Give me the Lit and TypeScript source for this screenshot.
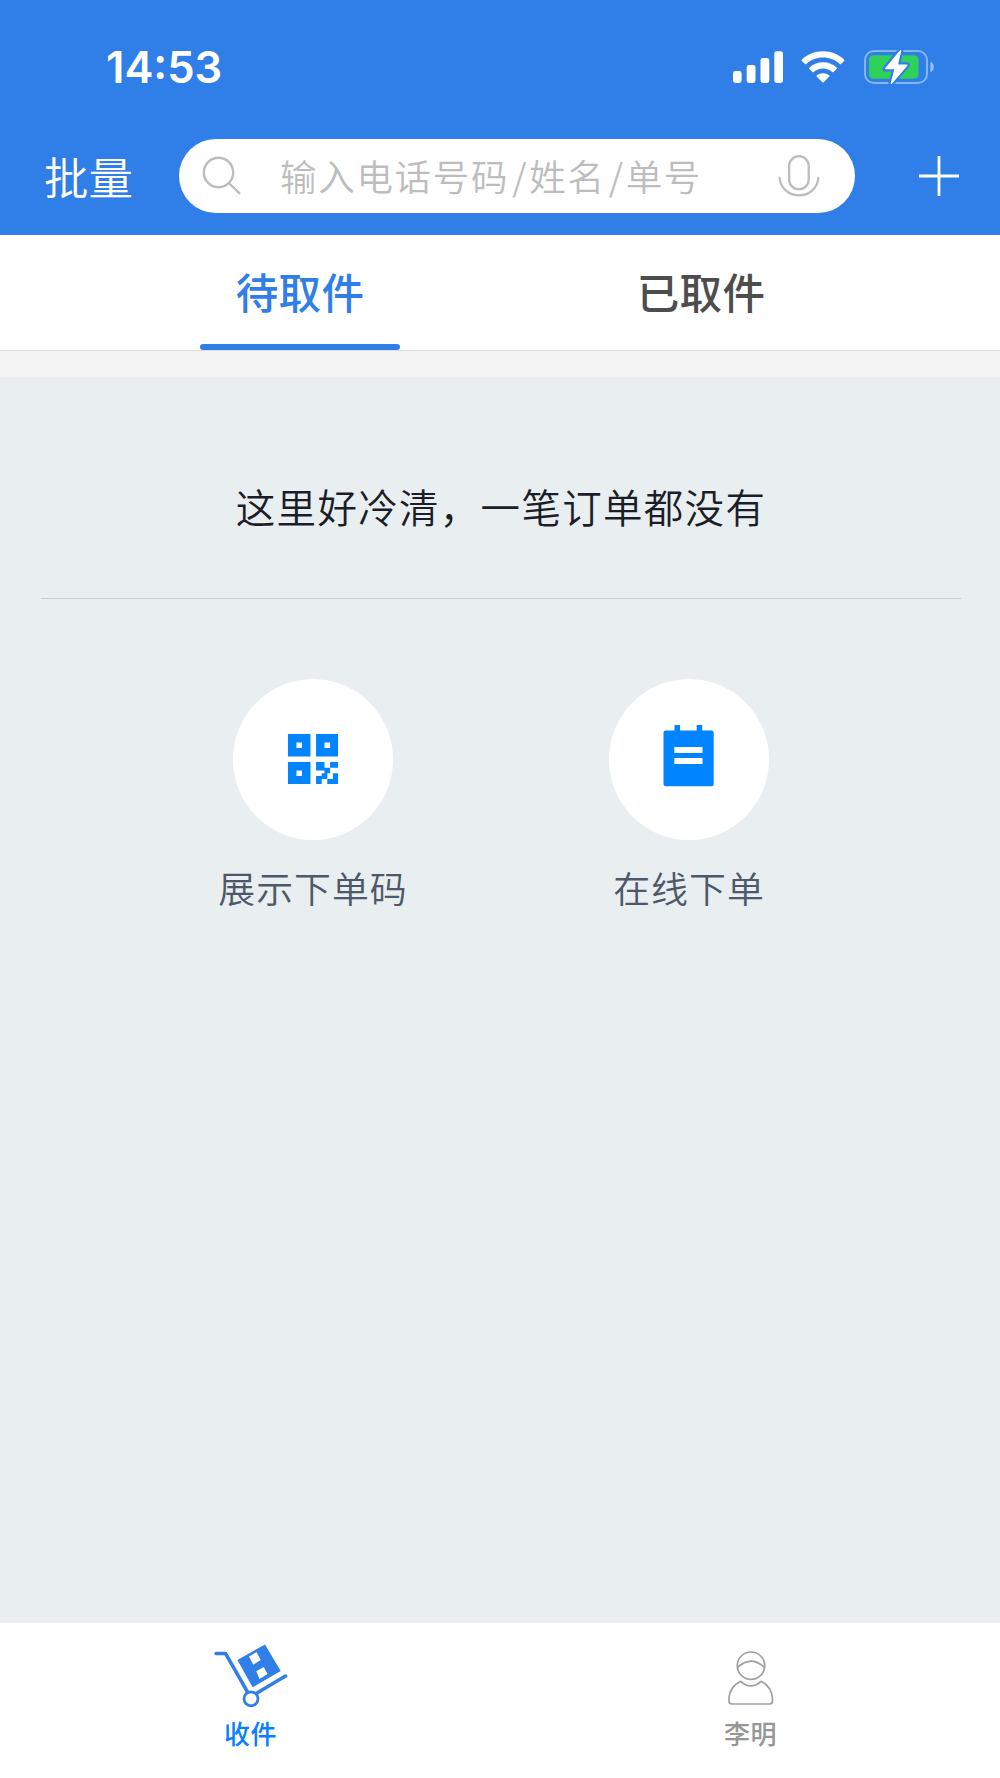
import { LitElement, html, css } from "lit";
import { customElement, property } from "lit/decorators.js";

const signal = html`<svg width="50" height="32" viewBox="0 0 50 32" fill="#fff">
  <rect x="0" y="20" width="8.6" height="12" rx="2.4" /><rect x="13.7" y="14" width="8.8" height="18" rx="2.4" />
  <rect x="27.5" y="7" width="8.8" height="25" rx="2.4" /><rect x="41.3" y="0.3" width="8.7" height="31.7" rx="2.4" />
</svg>`;

const wifi = html`<svg width="44" height="32" viewBox="0 0 44 32" fill="#fff">
  <path d="M22 0.3C30.4 0.3 38 3.4 43.2 8.8Q43.7 9.4 43.2 9.9L40 13.1Q39.4 13.6 38.8 13.1C34.3 8.8 28.5 6.5 22 6.5S9.7 8.8 5.2 13.1Q4.6 13.6 4 13.1L0.8 9.9Q0.3 9.4 0.8 8.8C6 3.4 13.6 0.3 22 0.3Z" />
  <path d="M22 11.3C27.3 11.3 32.2 13.3 35.8 16.7Q36.3 17.3 35.8 17.8L32.5 21Q31.9 21.5 31.3 21C28.8 18.8 25.5 17.5 22 17.5S15.2 18.8 12.7 21Q12.1 21.5 11.5 21L8.2 17.8Q7.7 17.3 8.2 16.7C11.8 13.3 16.7 11.3 22 11.3Z" />
  <path d="M22 22.2C24.4 22.2 26.6 23.1 28.3 24.5Q28.8 25.1 28.3 25.6L22.6 31.3Q22 31.9 21.4 31.3L15.7 25.6Q15.2 25.1 15.7 24.5C17.4 23.1 19.6 22.2 22 22.2Z" />
</svg>`;

const battery = html`<svg width="70" height="36" viewBox="0 0 70 36">
  <rect x="1" y="2" width="62" height="32" rx="9" fill="none" stroke="#fff" stroke-opacity=".42" stroke-width="2" />
  <path d="M66.4 12.7v10.6c2.1-.9 3.4-2.9 3.4-5.3s-1.3-4.4-3.4-5.3z" fill="#fff" fill-opacity=".5" />
  <rect x="5" y="6.2" width="49.5" height="23.6" rx="4.5" fill="#30d158" />
  <path d="M36.6 1.5L21.4 19.8H31.2L27.2 34.5L43 16H33.3Z" fill="#307ee7" stroke="#307ee7" stroke-width="5.6" stroke-linejoin="round" />
  <path d="M36.6 1.8L21.6 19.6H31.2L27.4 34.2L42.8 16.2H33.2Z" fill="#fff" stroke="#fff" stroke-width="1.4" stroke-linejoin="round" />
</svg>`;

const search = html`<svg width="40" height="40" viewBox="0 0 40 40" fill="none" stroke="#bdbdbd" stroke-width="2.4" stroke-linecap="round">
  <circle cx="16.5" cy="16.5" r="14.7" /><path d="M26.8 27L37.3 37.2" />
</svg>`;

const mic = html`<svg width="42" height="42" viewBox="0 0 42 42" fill="none" stroke="#bdbdbd" stroke-width="2.3" stroke-linecap="round">
  <rect x="11.1" y="1.2" width="19.6" height="33" rx="9.8" /><path d="M1.6 23C2.4 33 10.5 40.4 21 40.4S39.6 33 40.3 23" />
</svg>`;

const plus = html`<svg width="40" height="40" viewBox="0 0 40 40" stroke="#fff" stroke-width="2.8"><path d="M20 0V40M0 20H40" /></svg>`;

const qr = html`<svg width="50.5" height="50.5" viewBox="0 0 18 18" fill="#0084ff">
  <path fill-rule="evenodd" d="M0 0H8V8H0ZM3 3V5H5V3ZM10 0H18V8H10ZM13 3V5H15V3ZM0 10H8V18H0ZM3 13V15H5V13Z" />
  <path d="M10 10H13V12H15V14H14V16H12V18H10V15H12V14H13V13H10ZM15 10H18V12H15ZM16 14H18V18H14V16H16Z" />
</svg>`;

const note = html`<svg width="51" height="62" viewBox="0 0 51 62" fill="#0084ff">
  <path fill-rule="evenodd" d="M11.5 0H17V5.5H33.7V0H39.2V5.5H48.5Q50.7 5.5 50.7 7.7V59Q50.7 61.3 48.5 61.3H2.7Q.5 61.3 .5 59V7.7Q.5 5.5 2.7 5.5H11.5ZM11.3 22V28H39.5V22ZM11.3 33V39H39.5V33Z" />
</svg>`;

const cart = html`<svg width="76" height="64" viewBox="0 0 76 64" fill="none" stroke="#307ee7" stroke-width="3.5" stroke-linecap="round" stroke-linejoin="round">
  <path d="M4 9.6H13.6L35.6 48.2M45 49L73.5 32" />
  <circle cx="39" cy="54.8" r="7" stroke-width="2.8" />
  <path d="M25.4 16L53 .4L68.7 27L40.6 43.2Z" fill="#307ee7" stroke="none" />
  <path d="M37 12.6L44.5 8L48.7 16L41.3 20.7ZM44.3 27.2L51.7 23L55.6 30L47.5 35Z" fill="#fff" stroke="none" />
</svg>`;

const person = html`<svg width="46" height="54" viewBox="0 0 46 54" fill="none" stroke="#a0a0a0" stroke-width="1.7" stroke-linejoin="round">
  <circle cx="23" cy="14.7" r="13.7" />
  <path d="M9.2 16.5Q17 10.2 23 10.2T36.8 16.5" />
  <path d="M12.8 30.3C5.5 33.5 1 40.5 1 48V50Q1 53 4 53H41.5Q44.5 53 44.5 50V48C44.5 40.5 40 33.5 33 30.3C27 36.3 18.5 36.3 12.8 30.3Z" />
</svg>`;

@customElement("status-bar")
export class StatusBar extends LitElement {
  static styles = css`
    :host { display: flex; justify-content: space-between; align-items: center; height: 136px; box-sizing: border-box; padding: 0 66px 2px 106px; }
    .time { font: 600 43.5px/50px Inter, sans-serif; color: #fff; }
    .icons { display: flex; align-items: center; }
    svg { display: block; }
    .wifi { margin: 0 19px 0 18px; }
  `;
  render() {
    return html`<div class="time">14:53</div>
      <div class="icons">${signal}<div class="wifi">${wifi}</div>${battery}</div>`;
  }
}

@customElement("search-header")
export class SearchHeader extends LitElement {
  static styles = css`
    :host { display: flex; align-items: center; height: 80px; color: #fff; padding: 0 41px 0 44px; box-sizing: border-box; }
    svg { display: block; }
    .batch { width: 135px; font-size: 44.5px; line-height: 60px; font-weight: 350; font-family: "Noto Sans CJK SC DemiLight", "Noto Sans CJK SC", sans-serif; }
    .pill { display: flex; align-items: center; width: 676px; height: 74px; box-sizing: border-box; padding: 0 35px 0 23px; border-radius: 37px; background: #fff; margin-right: 64px; }
    .hint { flex: 1; margin-left: 38px; color: #bdbdbd; font-size: 36.5px; line-height: 50px; letter-spacing: 1.7px; font-weight: 350; white-space: nowrap; font-family: "Noto Sans CJK SC DemiLight", "Noto Sans CJK SC", sans-serif; }
    .slash { padding: 0 1px 0 3px; }
  `;
  render() {
    return html`<div class="batch">批量</div>
      <div class="pill">${search}<div class="hint">输入电话号码<span class="slash">/</span>姓名<span class="slash">/</span>单号</div>${mic}</div>
      ${plus}`;
  }
}

@customElement("tab-strip")
export class TabStrip extends LitElement {
  static styles = css`
    :host { display: flex; justify-content: center; height: 116px; box-sizing: border-box; padding-left: 1px; background: #fff; border-bottom: 1.5px solid #dedede; }
    .tab { display: flex; flex-direction: column; align-items: center; width: 401px; font-size: 42.5px; font-weight: 500; line-height: 60px; letter-spacing: .4px; color: #4d4d4d; padding-top: 26px; box-sizing: border-box; }
    .active { color: #307ee7; }
    .bar { width: 200px; height: 5.5px; border-radius: 3px; background: #307ee7; margin-top: 23.5px; }
  `;
  render() {
    return html`<div class="tab active">待取件<div class="bar"></div></div><div class="tab">已取件</div>`;
  }
}

@customElement("round-action")
export class RoundAction extends LitElement {
  @property() label = "";
  @property({ attribute: false }) icon: unknown = null;
  static styles = css`
    :host { display: flex; flex-direction: column; align-items: center; width: 376px; }
    .disc { display: flex; align-items: center; justify-content: center; width: 160px; height: 160.5px; border-radius: 50%; background: #fff; }
    .label { margin-top: 21.5px; font-size: 36.9px; line-height: 52px; letter-spacing: 1px; color: #4d5869; font-weight: 350; font-family: "Noto Sans CJK SC DemiLight", "Noto Sans CJK SC", sans-serif; }
    svg { display: block; margin: 0 0 1px 0; }
    :host([raised]) svg { margin: 0 1px 6px 0; }
  `;
  render() {
    return html`<div class="disc">${this.icon}</div><div class="label">${this.label}</div>`;
  }
}

@customElement("nav-item")
export class NavItem extends LitElement {
  @property() label = "";
  @property({ type: Boolean, reflect: true }) active = false;
  @property({ attribute: false }) icon: unknown = null;
  static styles = css`
    :host { display: flex; flex-direction: column; align-items: center; flex: 1; color: #969696; }
    :host([active]) { color: #0a80ff; }
    .icon { display: flex; align-items: flex-end; height: 82px; padding-left: 2px; }
    :host([active]) .icon { height: 85px; padding-left: 0; }
    .label { height: 36px; margin-top: 10px; font-size: 26px; line-height: 36px; font-weight: 500; letter-spacing: .5px; padding-left: 1px; }
    :host([active]) .label { margin-top: 7px; }
    svg { display: block; }
  `;
  render() {
    return html`<div class="icon">${this.icon}</div><div class="label">${this.label}</div>`;
  }
}

@customElement("app-root")
export class AppRoot extends LitElement {
  static styles = css`
    :host { display: flex; flex-direction: column; width: 1000px; height: 1778px; overflow: hidden; background: #e9eef0; font-family: "Noto Sans CJK SC", sans-serif; }
    .top { height: 234.5px; flex: none; background: #307ee7; }
    .strip { height: 26px; flex: none; background: #f3f3f3; }
    .main { flex: 1; padding: 0 39px 0 41px; }
    .empty { padding-top: 100px; height: 121px; text-align: center; font-size: 39.5px; line-height: 58px; letter-spacing: 1.3px; color: #1b1e28; border-bottom: 1.5px solid #c9cdd6; font-weight: 350; font-family: "Noto Sans CJK SC DemiLight", "Noto Sans CJK SC", sans-serif; }
    .actions { display: flex; justify-content: center; padding-top: 80.5px; }
    .nav { display: flex; height: 155px; flex: none; background: #fff; }
  `;
  render() {
    return html`<div class="top"><status-bar></status-bar><search-header></search-header></div>
      <tab-strip></tab-strip>
      <div class="strip"></div>
      <div class="main">
        <div class="empty">这里好冷清，一笔订单都没有</div>
        <div class="actions">
          <round-action label="展示下单码" .icon=${qr}></round-action>
          <round-action raised label="在线下单" .icon=${note}></round-action>
        </div>
      </div>
      <div class="nav">
        <nav-item active label="收件" .icon=${cart}></nav-item>
        <nav-item label="李明" .icon=${person}></nav-item>
      </div>`;
  }
}
